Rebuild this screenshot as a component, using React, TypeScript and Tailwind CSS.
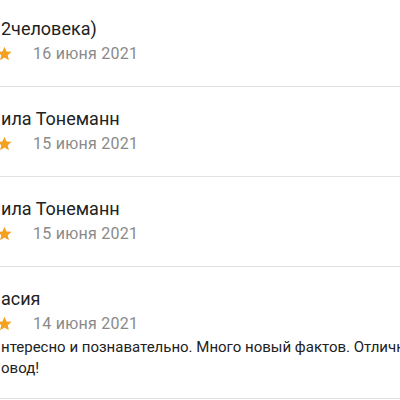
import React from "react";

function Star() {
  return (
    <svg width="17" height="17" viewBox="0 0 24 24" className="shrink-0 -ml-[4px]">
      <path
        d="M12 2.5l2.9 6.6 7.1.6-5.4 4.7 1.6 7-6.2-3.7-6.2 3.7 1.6-7L2 9.7l7.1-.6z"
        fill="#f5a01e"
      />
    </svg>
  );
}

function Row({ title, date, body }: { title: string; date: string; body?: string[] }) {
  return (
    <div className="pt-5 pb-[21px] border-b border-[#e2e2e2]">
      <div className="text-[18px] leading-6 text-[#222222] whitespace-nowrap pl-[1px]">{title}</div>
      <div className="flex items-center h-6 pt-[1px]">
        <Star />
        <span className="ml-[20px] text-[16px] leading-6 tracking-[0.25px] text-[#8a8a8a] whitespace-nowrap">
          {date}
        </span>
      </div>
      {body && (
        <div className="mt-[2px] -mb-[2px] text-[15px] leading-[21px] text-[#222222] whitespace-nowrap pl-[1px]">
          {body.map((l, i) => (
            <div key={i}>{l}</div>
          ))}
        </div>
      )}
    </div>
  );
}

export default function App() {
  return (
    <div
      className="w-[400px] h-[400px] overflow-hidden bg-white"
      style={{ fontFamily: "Roboto, 'Noto Sans', sans-serif" }}
    >
      <div className="-mt-[3px]">
        <Row title="2человека)" date="16 июня 2021" />
        <Row title="ила Тонеманн" date="15 июня 2021" />
        <Row title="ила Тонеманн" date="15 июня 2021" />
        <Row
          title="асия"
          date="14 июня 2021"
          body={["нтересно и познавательно. Много новый фактов. Отличный", "овод!"]}
        />
      </div>
    </div>
  );
}
